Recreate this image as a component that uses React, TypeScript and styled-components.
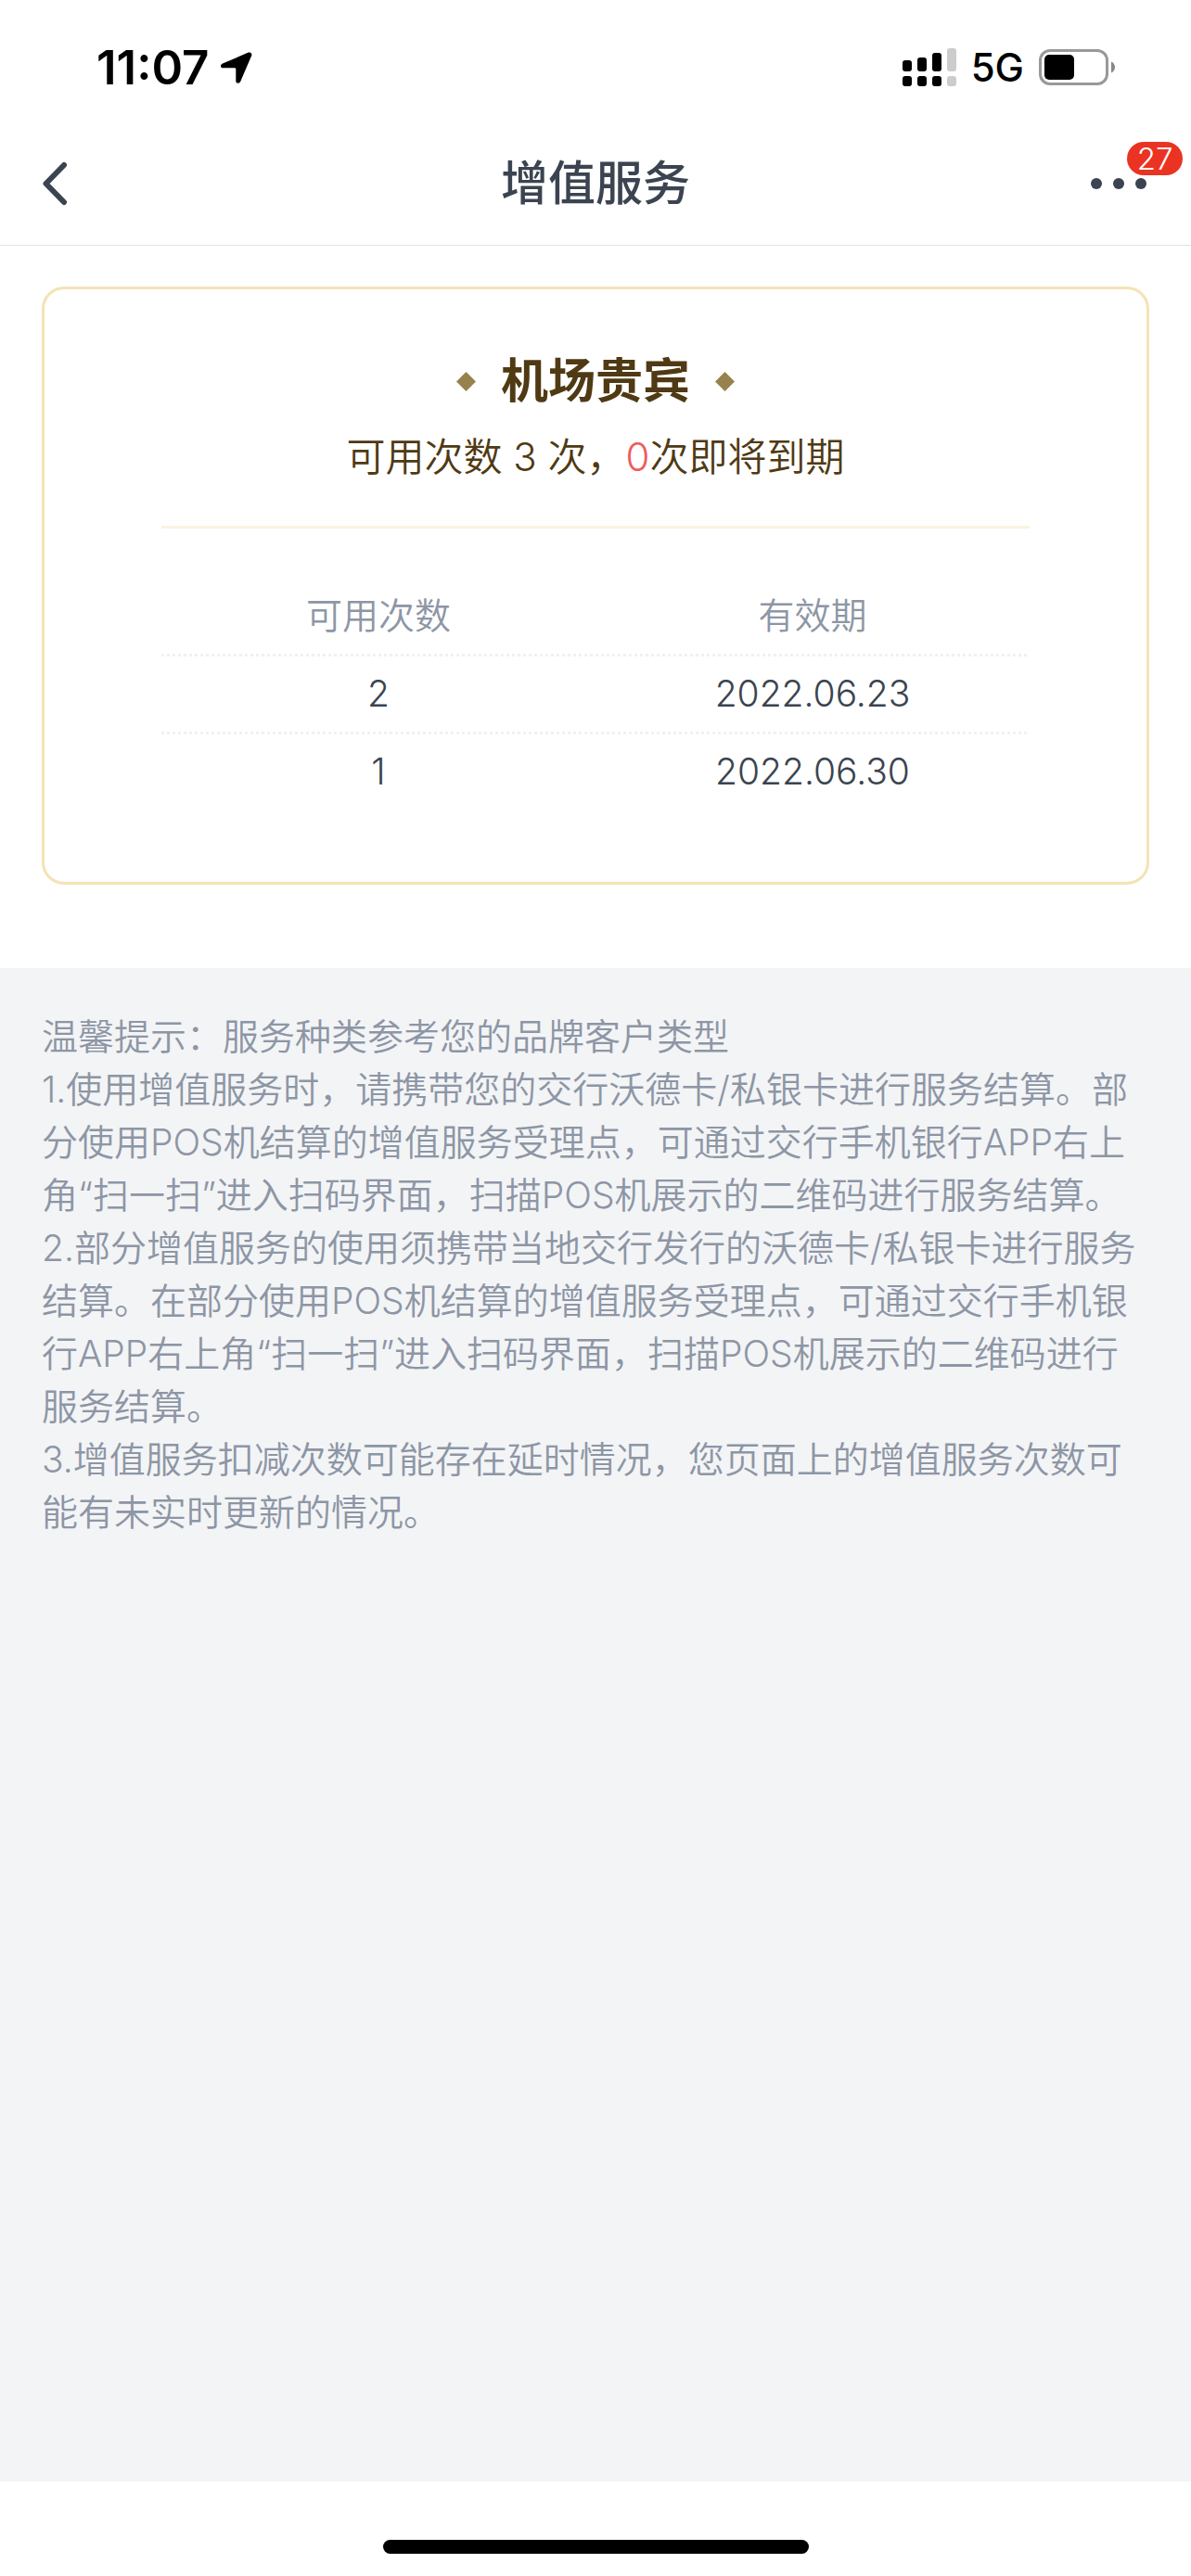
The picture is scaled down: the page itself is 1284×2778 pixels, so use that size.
import React from "react";
import styled, { createGlobalStyle } from "styled-components";

const GlobalStyle = createGlobalStyle`
  *, *::before, *::after { box-sizing: border-box; }
  body {
    margin: 0;
    background: #ffffff;
    font-family: Inter, "Noto Sans CJK SC", sans-serif;
    -webkit-font-smoothing: antialiased;
  }
`;

const Page = styled.div`
  display: flex;
  flex-direction: column;
  min-height: 100vh;
`;

const StatusBar = styled.div`
  display: flex;
  align-items: center;
  justify-content: space-between;
  height: 133px;
  padding: 12px 81px 0 104px;
  color: #000000;
`;

const StatusGroup = styled.div<{ $gap: number }>`
  display: flex;
  align-items: center;
  gap: ${(p) => p.$gap}px;
`;

const Clock = styled.time`
  font-size: 51px;
  font-weight: 600;
  line-height: 60px;
`;

const Network = styled.span`
  font-size: 42px;
  font-weight: 450;
  line-height: 60px;
`;

const NavBar = styled.header`
  display: grid;
  grid-template-columns: 1fr auto 1fr;
  align-items: center;
  height: 132px;
  padding: 0 45px 2px;
  border-bottom: 1px solid #e1e2e4;
  color: #3b4450;
`;

const NavTitle = styled.h1`
  margin: 0;
  font-size: 51px;
  font-weight: 500;
  line-height: 72px;
`;

const IconButton = styled.button<{ $align: "start" | "end" }>`
  position: relative;
  display: flex;
  justify-self: ${(p) => p.$align};
  padding: 0;
  border: 0;
  background: none;
  color: inherit;
  font: inherit;
`;

const Badge = styled.span`
  position: absolute;
  right: -36px;
  bottom: 33px;
  width: 60px;
  height: 36px;
  border-radius: 18px;
  background: #ea3323;
  color: #ffffff;
  font-size: 33px;
  font-weight: 350;
  line-height: 36px;
  text-align: center;
`;

const Services = styled.main`
  padding: 44px 45px 90px;
`;

const Card = styled.section`
  padding: 66px 126px 78px;
  border: 3px solid #f5e2b5;
  border-radius: 24px;
`;

const CardTitle = styled.h2`
  display: flex;
  align-items: center;
  justify-content: center;
  gap: 27px;
  margin: 0;
  color: #4f3a14;
  font-size: 51px;
  font-weight: 700;
  line-height: 66px;
`;

const Summary = styled.p`
  margin: 0;
  padding: 19px 0 44px;
  border-bottom: 3px solid #fbf3e1;
  color: #4f3a14;
  font-size: 42px;
  font-weight: 350;
  line-height: 60px;
  text-align: center;
`;

const Expiring = styled.span`
  color: #f05b5b;
`;

const UsageTable = styled.table`
  width: 100%;
  margin-top: 54px;
  border-spacing: 0;
  table-layout: fixed;
  font-size: 39px;
  font-weight: 350;
  line-height: 57px;
  text-align: center;
`;

const Row = styled.tr<{ $divided: boolean }>`
  background: ${(p) =>
    p.$divided
      ? "repeating-linear-gradient(90deg, #f1f1f3 0 3px, transparent 3px 6px) left bottom / 100% 3px no-repeat"
      : "none"};
`;

const HeadCell = styled.th`
  padding: 11px 0 16px;
  color: #8d96a5;
  font-weight: inherit;
`;

const Cell = styled.td`
  padding: 11px 0 16px;
  color: #3b4450;

  tr:last-child > & {
    padding-bottom: 13px;
  }
`;

const Tips = styled.aside`
  flex: 1;
  padding: 45px;
  background: #f3f4f6;
  color: #8d96a5;
  font-size: 39px;
  font-weight: 350;
  line-height: 57px;
`;

const Tip = styled.p`
  margin: 0;
`;

const HomeArea = styled.footer`
  display: flex;
  justify-content: center;
  padding: 63px 0 24px;
`;

const HomeIndicator = styled.div`
  width: 459px;
  height: 15px;
  border-radius: 8px;
  background: #000000;
`;

const LocationIcon = () => (
  <svg width="34" height="34" viewBox="0 0 34 34" aria-hidden="true">
    <path
      d="M2 12.6 29.8 .6C32 -.2 34 1.400 33.300 3.700L21.300 31.800C20.200 34.600 16.300 34.300 16.300 31.200V18.600Q16.300 17.300 15 17.300H2.600C-.6 17.300 -.9 13.800 2 12.600Z"
      fill="currentColor"
    />
  </svg>
);

const SIGNAL_BARS = [
  { x: 0, top: 13, color: "#000000" },
  { x: 16, top: 10, color: "#000000" },
  { x: 32, top: 5, color: "#000000" },
  { x: 48, top: 0, color: "#cccccc" },
];

const SignalIcon = () => (
  <svg width="58" height="41" viewBox="0 0 58 41" aria-hidden="true">
    {SIGNAL_BARS.map((bar) => (
      <g key={bar.x} fill={bar.color}>
        <rect x={bar.x} y={bar.top} width="10" height={25 - bar.top} rx="3" />
        <rect x={bar.x} y="30" width="10" height="11" rx="3" />
      </g>
    ))}
  </svg>
);

const BatteryIcon = () => (
  <svg width="83" height="39" viewBox="0 0 83 39" aria-hidden="true">
    <rect x="1.5" y="1.5" width="72" height="36" rx="10.500" fill="none" stroke="#999999" strokeWidth="3" />
    <rect x="6" y="6" width="32" height="27" rx="5" fill="#000000" />
    <path d="M78 13.500C80.700 14.500 82 17 82 19.500S80.700 24.500 78 25.500Z" fill="#888888" />
  </svg>
);

const BackIcon = () => (
  <svg width="28" height="48" viewBox="0 0 28 48" aria-hidden="true">
    <path
      d="M24 4 4.500 24 24 44"
      fill="none"
      stroke="currentColor"
      strokeWidth="6"
      strokeLinecap="round"
      strokeLinejoin="round"
    />
  </svg>
);

const MoreIcon = () => (
  <svg width="63" height="48" viewBox="0 0 63 48" fill="currentColor" aria-hidden="true">
    <circle cx="6" cy="24" r="6" />
    <circle cx="30" cy="24" r="6" />
    <circle cx="54" cy="24" r="6" />
  </svg>
);

const Diamond = () => (
  <svg width="21" height="21" viewBox="0 0 21 21" aria-hidden="true">
    <path d="M10.500 0 21 10.500 10.500 21 0 10.500Z" fill="#97824d" />
  </svg>
);

const USAGES = [
  { count: 2, expires: "2022.06.23" },
  { count: 1, expires: "2022.06.30" },
];

const TIPS = [
  "温馨提示：服务种类参考您的品牌客户类型",
  "1.使用增值服务时，请携带您的交行沃德卡/私银卡进行服务结算。部分使用POS机结算的增值服务受理点，可通过交行手机银行APP右上角“扫一扫”进入扫码界面，扫描POS机展示的二维码进行服务结算。",
  "2.部分增值服务的使用须携带当地交行发行的沃德卡/私银卡进行服务结算。在部分使用POS机结算的增值服务受理点，可通过交行手机银行APP右上角“扫一扫”进入扫码界面，扫描POS机展示的二维码进行服务结算。",
  "3.增值服务扣减次数可能存在延时情况，您页面上的增值服务次数可能有未实时更新的情况。",
];

export default function App() {
  return (
    <Page lang="zh-CN">
      <GlobalStyle />
      <StatusBar>
        <StatusGroup $gap={13}>
          <Clock>11:07</Clock>
          <LocationIcon />
        </StatusGroup>
        <StatusGroup $gap={16}>
          <SignalIcon />
          <Network>5G</Network>
          <BatteryIcon />
        </StatusGroup>
      </StatusBar>
      <NavBar>
        <IconButton type="button" $align="start" aria-label="返回">
          <BackIcon />
        </IconButton>
        <NavTitle>增值服务</NavTitle>
        <IconButton type="button" $align="end" aria-label="更多">
          <MoreIcon />
          <Badge>27</Badge>
        </IconButton>
      </NavBar>
      <Services>
        <Card>
          <CardTitle>
            <Diamond />
            机场贵宾
            <Diamond />
          </CardTitle>
          <Summary>
            可用次数 3 次，<Expiring>0</Expiring>次即将到期
          </Summary>
          <UsageTable>
            <thead>
              <Row $divided>
                <HeadCell scope="col">可用次数</HeadCell>
                <HeadCell scope="col">有效期</HeadCell>
              </Row>
            </thead>
            <tbody>
              {USAGES.map((usage, i) => (
                <Row key={usage.expires} $divided={i < USAGES.length - 1}>
                  <Cell>{usage.count}</Cell>
                  <Cell>{usage.expires}</Cell>
                </Row>
              ))}
            </tbody>
          </UsageTable>
        </Card>
      </Services>
      <Tips>
        {TIPS.map((tip) => (
          <Tip key={tip}>{tip}</Tip>
        ))}
      </Tips>
      <HomeArea>
        <HomeIndicator />
      </HomeArea>
    </Page>
  );
}
